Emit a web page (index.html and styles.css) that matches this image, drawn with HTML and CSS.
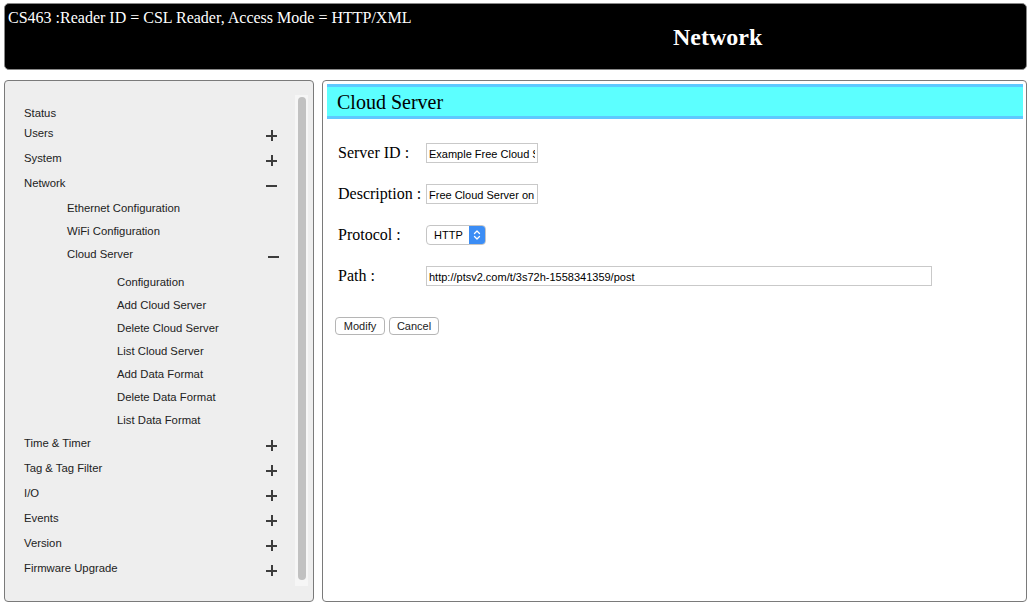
FILE: index.html
```html
<!DOCTYPE html>
<html>
<head>
<meta charset="utf-8">
<link rel="stylesheet" href="styles.css">
</head>
<body>
<div class="page">
  <header class="top">
    <div class="top-line">CS463 :Reader ID = CSL Reader, Access Mode = HTTP/XML</div>
    <div class="top-title">Network</div>
  </header>
  <div class="main">
    <aside class="side">
      <nav class="menu">
        <div class="row r20 l1">Status</div>
        <div class="row l1">Users<span class="ic plus"></span></div>
        <div class="row l1">System<span class="ic plus"></span></div>
        <div class="row l1">Network<span class="ic minus"></span></div>
        <div class="row r23 l2">Ethernet Configuration</div>
        <div class="row r23 l2">WiFi Configuration</div>
        <div class="row r28 l2">Cloud Server<span class="ic minus ic-r"></span></div>
        <div class="row r23 l3">Configuration</div>
        <div class="row r23 l3">Add Cloud Server</div>
        <div class="row r23 l3">Delete Cloud Server</div>
        <div class="row r23 l3">List Cloud Server</div>
        <div class="row r23 l3">Add Data Format</div>
        <div class="row r23 l3">Delete Data Format</div>
        <div class="row r23 l3">List Data Format</div>
        <div class="row l1">Time &amp; Timer<span class="ic plus"></span></div>
        <div class="row l1">Tag &amp; Tag Filter<span class="ic plus"></span></div>
        <div class="row l1">I/O<span class="ic plus"></span></div>
        <div class="row l1">Events<span class="ic plus"></span></div>
        <div class="row l1">Version<span class="ic plus"></span></div>
        <div class="row l1">Firmware Upgrade<span class="ic plus"></span></div>
      </nav>
      <div class="track"><div class="thumb"></div></div>
    </aside>
    <section class="content">
      <h2 class="heading">Cloud Server</h2>
      <div class="form">
        <div class="frow">
          <label class="lbl">Server ID :</label>
          <input class="input short" type="text" readonly value="Example Free Cloud Server">
        </div>
        <div class="frow">
          <label class="lbl">Description :</label>
          <input class="input short" type="text" readonly value="Free Cloud Server on ptsv2">
        </div>
        <div class="frow">
          <label class="lbl">Protocol :</label>
          <div class="select"><span class="sel-text">HTTP</span><span class="sel-btn"><svg width="10" height="14" viewBox="0 0 10 14"><path d="M2.5 5.5 L5 3 L7.5 5.5 M2.5 8.5 L5 11 L7.5 8.5" fill="none" stroke="#fff" stroke-width="1.3" stroke-linecap="round" stroke-linejoin="round"/></svg></span></div>
        </div>
        <div class="frow">
          <label class="lbl">Path :</label>
          <input class="input long" type="text" readonly value="http://ptsv2.com/t/3s72h-1558341359/post">
        </div>
      </div>
      <div class="buttons">
        <button class="btn">Modify</button>
        <button class="btn">Cancel</button>
      </div>
    </section>
  </div>
</div>
</body>
</html>
```

FILE: styles.css
```css
* { box-sizing: border-box; }
html, body { margin: 0; padding: 0; background: #fff; }
body { font-family: "Liberation Serif", "Times New Roman", serif; color: #000; }

.page {
  width: 1030px;
  height: 606px;
  padding: 3px 3px 0 4px;
  display: flex;
  flex-direction: column;
  gap: 10px;
}

.top {
  height: 67px;
  background: #000;
  color: #fff;
  border: 1px solid #888;
  border-radius: 5px;
  padding: 4px 0 0 3px;
}
.top-line { font-size: 16px; line-height: 19px; }
.top-title {
  font-size: 24px;
  font-weight: bold;
  line-height: 24px;
  padding-left: 665px;
  margin-top: -2px;
}

.main {
  display: flex;
  gap: 8px;
  height: 522px;
}

.side {
  width: 310px;
  background: #eeeeee;
  border: 1px solid #7a7a7a;
  border-radius: 4px;
  display: flex;
  padding: 0;
}
.menu {
  flex: 1;
  padding-top: 22px;
  font-family: "Liberation Sans", Arial, Helvetica, sans-serif;
  font-size: 11.3px;
  color: #222;
}
.row {
  position: relative;
  height: 25px;
  line-height: 20px;
}
.r20 { height: 20px; }
.r23 { height: 23px; }
.r28 { height: 28px; }
.l1 { padding-left: 19px; }
.l2 { padding-left: 62px; }
.l3 { padding-left: 112px; }

.ic {
  position: absolute;
  right: 18px;
  top: 7px;
  width: 11px;
  height: 11px;
}
.ic-r { right: 16px; }
.ic::before, .ic::after {
  content: "";
  position: absolute;
  background: #3c3c3c;
}
.ic::before { left: 0; right: 0; top: 4.5px; height: 2.2px; }
.plus::after { top: 0; bottom: 0; left: 4.5px; width: 2.2px; }
.minus::after { display: none; }

.track {
  width: 13px;
  margin: 14px 5px 15px 0;
  background: #f6f6f6;
  padding: 2px 2px 6px 3px;
}
.thumb {
  height: 100%;
  background: #c1c1c1;
  border-radius: 4px;
}

.content {
  flex: 1;
  background: #fff;
  border: 1px solid #7a7a7a;
  border-radius: 4px;
  padding: 3px 3px 0 4px;
}
.heading {
  margin: 0;
  height: 35px;
  background: #5cffff;
  border-top: 3px solid #5ec9ff;
  border-bottom: 3px solid #5ec9ff;
  font-size: 20px;
  font-weight: normal;
  line-height: 31px;
  padding-left: 10px;
}

.form {
  padding: 24px 0 0 11px;
  display: flex;
  flex-direction: column;
  gap: 21px;
}
.frow {
  display: flex;
  align-items: center;
  height: 20px;
}
.lbl {
  width: 88px;
  font-size: 16px;
  line-height: 20px;
}
.input {
  margin: 0;
  height: 20px;
  border: 1px solid #c9c9c9;
  font-family: "Liberation Sans", Arial, Helvetica, sans-serif;
  font-size: 11px;
  padding: 2px 2px 0 2px;
  color: #000;
  background: #fff;
  outline: none;
}
.short { width: 112px; }
.long { width: 506px; }

.select {
  display: flex;
  height: 20px;
  width: 60px;
  border: 1px solid #c5c5c5;
  border-radius: 4px;
  overflow: hidden;
  font-family: "Liberation Sans", Arial, Helvetica, sans-serif;
  font-size: 11px;
  background: #fff;
}
.sel-text {
  flex: 1;
  padding-left: 7px;
  line-height: 19px;
}
.sel-btn {
  width: 16px;
  background: #3b8df5;
  display: flex;
  align-items: center;
  justify-content: center;
}

.buttons {
  display: flex;
  gap: 4px;
  padding: 31px 0 0 8px;
}
.btn {
  margin: 0;
  width: 50px;
  height: 18px;
  padding: 0;
  background: #fff;
  border: 1px solid #b5b5b5;
  border-radius: 4px;
  font-family: "Liberation Sans", Arial, Helvetica, sans-serif;
  font-size: 11px;
  line-height: 16px;
  color: #222;
}
```
